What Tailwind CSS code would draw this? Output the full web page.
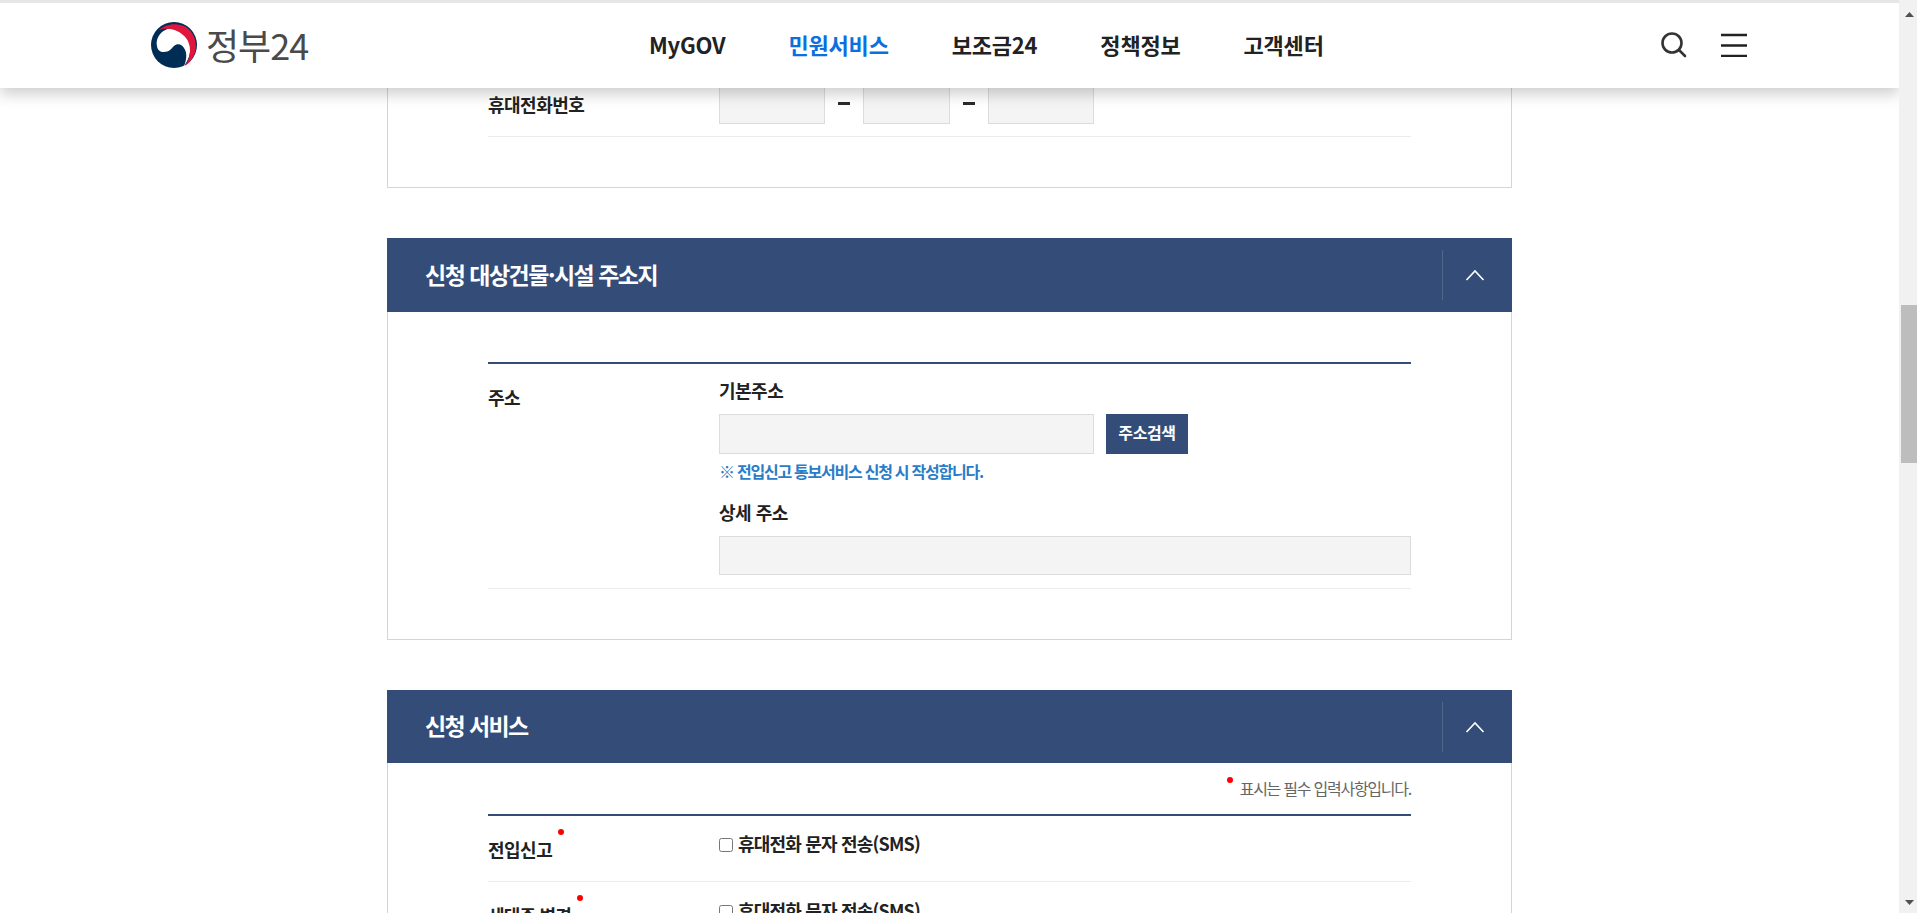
<!doctype html>
<html lang="ko">
<head>
<meta charset="utf-8">
<title>정부24</title>
<script src="https://cdn.jsdelivr.net/npm/@tailwindcss/browser@4"></script>
</head>
<body class="bg-white overflow-hidden font-['Noto_Sans_CJK_KR','Noto_Sans',sans-serif] text-[#222]">
<div class="relative h-[913px] w-[1917px] flex overflow-hidden">
  <div class="relative w-[1899px] h-[913px] overflow-hidden">
    <header class="absolute top-0 left-0 z-10 h-[88px] w-full bg-white border-t-[3px] border-[#e6e6e6] shadow-[0_6px_14px_rgba(0,0,0,0.2)] flex items-center">
      <div class="ml-[151px] w-[46px] h-[46px] shrink-0 -mt-[1px]">
        <svg viewBox="0 0 46 46" width="46" height="46">
          <circle cx="23" cy="23" r="23" fill="#002d56"/>
          <path d="M6 24 C4 14 13 6 22 6 C31 6 38 13 39.5 23 C40 31 37 39 33 44 C36 37 36 30 33 26 C31 22 26 21 23 24 C20 27 18 30 13 30 C9 30 6.5 28 6 24Z" fill="#fff"/>
          <path d="M8 8 C14 2 26 0 35 5 C44 11 48 24 42 35 C40 39 37 42 34 44 C40 35 41 24 35 16 C28 7 16 5 8 8Z" fill="#e0173d"/>
        </svg>
      </div>
      <div class="ml-[9px] w-[105px] text-[36px] leading-none tracking-[-1px] text-[#4a4a4a] font-normal whitespace-nowrap -mt-[3px]">정부24</div>
      <nav class="ml-[338px] flex items-center gap-[63px] text-[22px] font-semibold tracking-[-0.2px] text-[#222] whitespace-nowrap -mt-[3px]">
        <a>MyGOV</a>
        <a class="text-[#0a6fe0]">민원서비스</a>
        <a>보조금24</a>
        <a>정책정보</a>
        <a>고객센터</a>
      </nav>
      <div class="ml-auto mr-[152px] flex items-center gap-[33px] -mt-[1px]">
        <svg width="28" height="28" viewBox="0 0 28 28" fill="none" stroke="#333" stroke-width="2.6" stroke-linecap="round"><circle cx="12" cy="12" r="9.5"/><path d="M19 19l6 6"/></svg>
        <svg width="26" height="24" viewBox="0 0 26 24" fill="none" stroke="#222" stroke-width="2.6"><path d="M0 2h26M0 12.5h26M0 23h26"/></svg>
      </div>
    </header>

    <main class="flex flex-col items-center">
      <section class="w-[1125px] h-[188px] border border-t-0 border-[#d5d5d5] shrink-0">
        <div class="mx-[100px] h-[137px] border-b border-[#ececec] flex">
          <div class="w-[231px] pt-[92px]"><span class="relative text-[18px] leading-[24px] font-semibold tracking-[-0.5px] after:content-[''] after:absolute after:-right-[12px] after:-top-[10px] after:w-[6px] after:h-[6px] after:rounded-full after:bg-[#f00]">휴대전화번호</span></div>
          <div class="flex items-start pt-[85px] gap-[13px]">
            <div class="w-[106px] h-[39px] bg-[#f4f4f4] border border-[#dcdcdc]"></div>
            <div class="w-[12px] h-[2.5px] bg-[#2a2a2a] mt-[17px]"></div>
            <div class="w-[87px] h-[39px] bg-[#f4f4f4] border border-[#dcdcdc]"></div>
            <div class="w-[12px] h-[2.5px] bg-[#2a2a2a] mt-[17px]"></div>
            <div class="w-[106px] h-[39px] bg-[#f4f4f4] border border-[#dcdcdc]"></div>
          </div>
        </div>
      </section>

      <section class="w-[1125px] mt-[50px] h-[402px] border border-[#d5d5d5] border-t-0 shrink-0 flex flex-col">
        <div class="-mx-px h-[74px] bg-[#344d78] flex items-center shrink-0">
          <h2 class="pl-[38px] text-white text-[23px] font-bold tracking-[-1.5px] -mt-[1px]">신청 대상건물·시설 주소지</h2>
          <div class="ml-auto w-[70px] h-[50px] border-l border-white/15 flex items-center justify-center pr-[5px]">
            <svg width="20" height="12" viewBox="0 0 20 12" fill="none" stroke="#fff" stroke-width="1.6"><path d="M1.5 11L10 2l8.5 9"/></svg>
          </div>
        </div>
        <div class="mx-[100px] mt-[50px] border-t-2 border-[#344d78] h-[226px] flex relative">
          <div class="w-[231px] pt-[21px] text-[18px] leading-[24px] font-semibold tracking-[-0.5px]">주소</div>
          <div class="flex-1 flex flex-col">
            <div class="mt-[14px] h-[24px] text-[18px] leading-[24px] font-semibold tracking-[-0.5px]">기본주소</div>
            <div class="mt-[12px] flex gap-[12px]">
              <div class="w-[375px] h-[40px] bg-[#f4f4f4] border border-[#dcdcdc]"></div>
              <button class="w-[82px] h-[40px] bg-[#344d78] text-white text-[16px] font-semibold tracking-[-0.4px] pb-[4px]">주소검색</button>
            </div>
            <p class="mt-[6px] h-[22px] text-[#2a7cc7] text-[16px] leading-[22px] font-bold tracking-[-1.25px]">※ 전입신고 통보서비스 신청 시 작성합니다.</p>
            <div class="mt-[18px] h-[24px] text-[18px] leading-[24px] font-semibold tracking-[-0.5px]">상세 주소</div>
            <div class="mt-[12px] w-full h-[39px] bg-[#f4f4f4] border border-[#dcdcdc]"></div>
          </div>
        </div>
        <div class="mx-[100px] border-t border-[#ececec]"></div>
      </section>

      <section class="w-[1125px] mt-[50px] border border-[#d5d5d5] border-t-0 shrink-0 flex flex-col h-[300px]">
        <div class="-mx-px h-[73px] bg-[#344d78] flex items-center shrink-0">
          <h2 class="pl-[38px] text-white text-[23px] font-bold tracking-[-1.6px] -mt-[3px]">신청 서비스</h2>
          <div class="ml-auto w-[70px] h-[50px] border-l border-white/15 flex items-center justify-center pr-[5px]">
            <svg width="20" height="12" viewBox="0 0 20 12" fill="none" stroke="#fff" stroke-width="1.6"><path d="M1.5 11L10 2l8.5 9"/></svg>
          </div>
        </div>
        <div class="mx-[100px] h-[51px] flex justify-end items-start pt-[14px] relative">
          <span class="text-[16px] leading-[22px] text-[#666] tracking-[-1.25px] relative before:content-[''] before:absolute before:-left-[13px] before:top-[0px] before:w-[6px] before:h-[6px] before:rounded-full before:bg-[#f00]">표시는 필수 입력사항입니다.</span>
        </div>
        <div class="mx-[100px] border-t-2 border-[#344d78]">
          <div class="h-[66px] border-b border-[#ececec] flex">
            <div class="w-[231px] pt-[21px]"><span class="relative text-[18px] leading-[24px] font-semibold tracking-[-0.5px] after:content-[''] after:absolute after:-right-[12px] after:-top-[7px] after:w-[6px] after:h-[6px] after:rounded-full after:bg-[#f00]">전입신고</span></div>
            <label class="flex items-start pt-[15px] gap-[5px] text-[18px] leading-[24px] font-semibold tracking-[-0.8px]"><input type="checkbox" class="w-[14px] h-[14px] mt-[7px] m-0"><span>휴대전화 문자 전송(SMS)</span></label>
          </div>
          <div class="h-[65px] flex">
            <div class="w-[231px] pt-[21px]"><span class="relative text-[18px] leading-[24px] font-semibold tracking-[-0.8px] after:content-[''] after:absolute after:-right-[12px] after:-top-[7px] after:w-[6px] after:h-[6px] after:rounded-full after:bg-[#f00]">세대주 변경</span></div>
            <label class="flex items-start pt-[16px] gap-[5px] text-[18px] leading-[24px] font-semibold tracking-[-0.8px]"><input type="checkbox" class="w-[14px] h-[14px] mt-[7px] m-0"><span>휴대전화 문자 전송(SMS)</span></label>
          </div>
        </div>
      </section>
    </main>
  </div>
  <div class="w-[18px] h-[913px] bg-[#f1f1f1] relative shrink-0">
    <svg class="absolute top-[12px] left-[6px]" width="9" height="5" viewBox="0 0 9 5"><path d="M4.5 0L9 5H0Z" fill="#505050"/></svg>
    <div class="absolute top-[305px] left-[2px] w-[16px] h-[158px] bg-[#bdbdbd]"></div>
    <svg class="absolute bottom-[8px] left-[6px]" width="9" height="5" viewBox="0 0 9 5"><path d="M0 0H9L4.5 5Z" fill="#505050"/></svg>
  </div>
</div>
</body>
</html>
